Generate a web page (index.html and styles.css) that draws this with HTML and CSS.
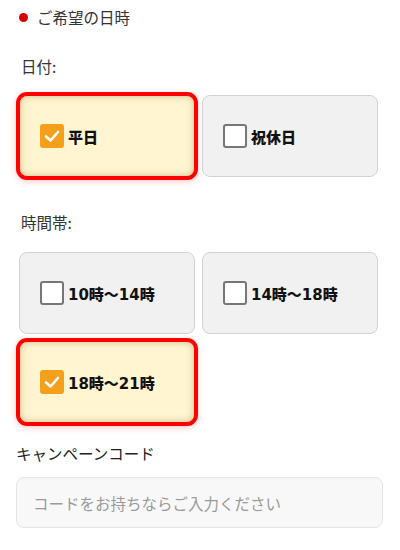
FILE: index.html
```html
<!DOCTYPE html>
<html lang="ja">
<head>
<meta charset="utf-8">
<link rel="stylesheet" href="styles.css">
</head>
<body>
<div class="page">
  <div class="title"><span class="dot"></span><span>ご希望の日時</span></div>

  <div class="label label-date">日付:</div>
  <div class="grid">
    <label class="card selected">
      <span class="box checked"><svg viewBox="0 0 22 22" width="22" height="22"><polyline points="5,11.5 9.5,15.5 17,7" fill="none" stroke="#fff" stroke-width="2.6" stroke-linecap="round" stroke-linejoin="round"/></svg></span>
      <span class="txt">平日</span>
    </label>
    <label class="card">
      <span class="box"></span>
      <span class="txt">祝休日</span>
    </label>
  </div>

  <div class="label label-time">時間帯:</div>
  <div class="grid">
    <label class="card">
      <span class="box"></span>
      <span class="txt">10時〜14時</span>
    </label>
    <label class="card">
      <span class="box"></span>
      <span class="txt">14時〜18時</span>
    </label>
    <label class="card selected">
      <span class="box checked"><svg viewBox="0 0 22 22" width="22" height="22"><polyline points="5,11.5 9.5,15.5 17,7" fill="none" stroke="#fff" stroke-width="2.6" stroke-linecap="round" stroke-linejoin="round"/></svg></span>
      <span class="txt">18時〜21時</span>
    </label>
  </div>

  <div class="campaign-label">キャンペーンコード</div>
  <div class="input"><span class="placeholder">コードをお持ちならご入力ください</span></div>
</div>
</body>
</html>
```

FILE: styles.css
```css
html, body {
  margin: 0;
  padding: 0;
  background: #fff;
}
body {
  font-family: "Noto Sans CJK JP", "Noto Sans", sans-serif;
  color: #222;
}
.page {
  padding-top: 5px;
}
.title {
  display: flex;
  align-items: center;
  height: 24px;
  padding-left: 19px;
  font-size: 15.5px;
  color: #333;
}
.dot {
  width: 9px;
  height: 9px;
  border-radius: 50%;
  background: #d40000;
  margin-right: 9px;
}
.label {
  height: 24px;
  line-height: 24px;
  font-size: 15.5px;
  padding-left: 21px;
  color: #333;
}
.label-date {
  margin-top: 25px;
  margin-bottom: 17px;
}
.label-time {
  margin-top: 33px;
  margin-bottom: 18px;
}
.grid {
  display: grid;
  grid-template-columns: 176px 176px;
  column-gap: 7px;
  row-gap: 7px;
  margin-left: 19px;
}
.card {
  box-sizing: border-box;
  height: 82px;
  display: flex;
  align-items: center;
  padding-left: 20px;
  background: #f1f1f1;
  border: 1px solid #d2d2d2;
  border-radius: 8px;
}
.card.selected {
  background: #fff5d1;
  border-color: #f00;
  box-shadow: 0 0 0 3px #f00, 0 2px 6px 3px rgba(255, 60, 60, 0.25), inset 0 0 7px rgba(120, 80, 0, 0.35);
}
.box {
  box-sizing: border-box;
  width: 24px;
  height: 24px;
  border: 2px solid #777;
  border-radius: 3px;
  background: #fff;
  display: flex;
  align-items: center;
  justify-content: center;
  flex: none;
}
.box.checked {
  border: none;
  background: #f5a01d;
}
.txt {
  margin-left: 4px;
  font-family: "DejaVu Sans", "Noto Sans CJK JP", sans-serif;
  font-weight: 900;
  font-size: 15px;
  color: #111;
  letter-spacing: 0;
}
.campaign-label {
  margin-top: 18px;
  padding-left: 16px;
  height: 24px;
  line-height: 24px;
  font-size: 15.5px;
  color: #222;
}
.input {
  box-sizing: border-box;
  margin: 12px 0 0 16px;
  width: 367px;
  height: 51px;
  background: #f8f8f8;
  border: 1px solid #e4e4e4;
  border-radius: 8px;
  display: flex;
  align-items: center;
  padding-left: 16px;
}
.placeholder {
  font-size: 15.5px;
  color: #9a9a9a;
}
```
